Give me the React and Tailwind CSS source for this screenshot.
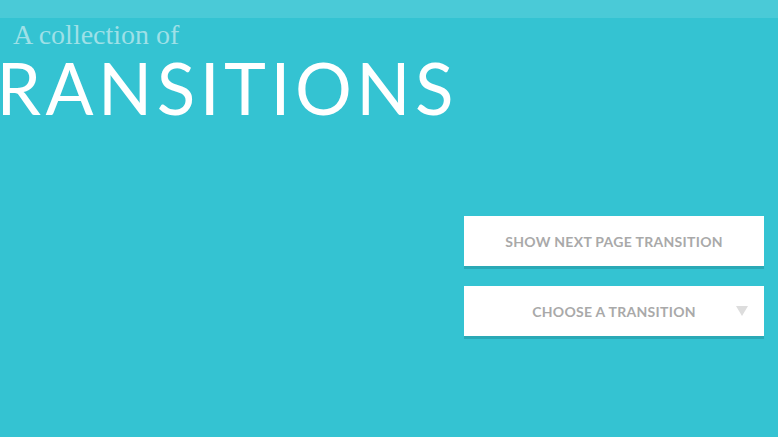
export default function App() {
  return (
    <div className="relative w-[778px] h-[437px] overflow-hidden bg-[#34c3d2]">
      <div className="h-[18px] bg-[#4acad7]" />
      <div className="pl-[13px] pt-[1px]">
        <div
          className="text-[28px] leading-[32px] text-[#9fe0e7]"
          style={{ fontFamily: '"Liberation Serif", serif' }}
        >
          A collection of
        </div>
      </div>
      <div
        className="ml-[-50px] mt-[-1px] text-[71px] leading-[76px] text-white tracking-[4.5px] whitespace-nowrap"
        style={{ fontFamily: 'Lato, sans-serif' }}
      >
        TRANSITIONS
      </div>
      <div className="flex flex-col items-end pr-[14px] mt-[90px] gap-[17px]">
        <button
          className="w-[300px] h-[53px] bg-white border-b-[3px] border-[#2aa9b6] text-[14px] font-bold text-[#a9a9a9] tracking-[0.3px]"
          style={{ fontFamily: 'Lato, sans-serif' }}
        >
          SHOW NEXT PAGE TRANSITION
        </button>
        <button
          className="relative w-[300px] h-[53px] bg-white border-b-[3px] border-[#2aa9b6] text-[14px] font-bold text-[#a9a9a9] tracking-[0.3px]"
          style={{ fontFamily: 'Lato, sans-serif' }}
        >
          CHOOSE A TRANSITION
          <span className="absolute right-[16px] top-[20px] w-0 h-0 border-l-[6px] border-r-[6px] border-t-[10px] border-l-transparent border-r-transparent border-t-[#dddddd]" />
        </button>
      </div>
    </div>
  );
}
